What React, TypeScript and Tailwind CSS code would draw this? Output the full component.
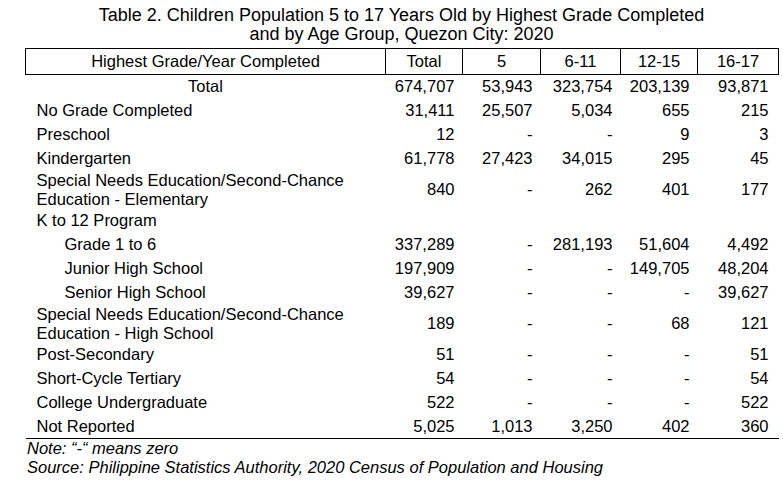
type Row = {
  label: string[];
  values: string[];
  indent?: boolean;
  center?: boolean;
  tall?: boolean;
};

const columns = ['Total', '5', '6-11', '12-15', '16-17'];
const colWidths = ['w-[77px]', 'w-[78px]', 'w-[80px]', 'w-[77px]', 'w-[81px]'];

const rows: Row[] = [
  { label: ['Total'], values: ['674,707', '53,943', '323,754', '203,139', '93,871'], center: true },
  { label: ['No Grade Completed'], values: ['31,411', '25,507', '5,034', '655', '215'] },
  { label: ['Preschool'], values: ['12', '-', '-', '9', '3'] },
  { label: ['Kindergarten'], values: ['61,778', '27,423', '34,015', '295', '45'] },
  {
    label: ['Special Needs Education/Second-Chance', 'Education - Elementary'],
    values: ['840', '-', '262', '401', '177'],
    tall: true,
  },
  { label: ['K to 12 Program'], values: ['', '', '', '', ''] },
  { label: ['Grade 1 to 6'], values: ['337,289', '-', '281,193', '51,604', '4,492'], indent: true },
  { label: ['Junior High School'], values: ['197,909', '-', '-', '149,705', '48,204'], indent: true },
  { label: ['Senior High School'], values: ['39,627', '-', '-', '-', '39,627'], indent: true },
  {
    label: ['Special Needs Education/Second-Chance', 'Education - High School'],
    values: ['189', '-', '-', '68', '121'],
    tall: true,
  },
  { label: ['Post-Secondary'], values: ['51', '-', '-', '-', '51'] },
  { label: ['Short-Cycle Tertiary'], values: ['54', '-', '-', '-', '54'] },
  { label: ['College Undergraduate'], values: ['522', '-', '-', '-', '522'] },
  { label: ['Not Reported'], values: ['5,025', '1,013', '3,250', '402', '360'] },
];

const App = () => {
  return (
    <div className="min-h-[488px] bg-white text-black font-['Liberation_Sans',Arial,sans-serif]">
      <div className="ml-[25px] w-[753px] pt-[6px]">
        <h1 className="text-center text-[18px] leading-[19px] font-normal mb-[4px]">
          Table 2. Children Population 5 to 17 Years Old by Highest Grade Completed
          <br />
          and by Age Group, Quezon City: 2020
        </h1>

        <table className="w-[753px] table-fixed border-collapse text-[16.5px] leading-[19px]">
          <colgroup>
            <col className="w-[360px]" />
            {colWidths.map((w, i) => (
              <col key={i} className={w} />
            ))}
          </colgroup>
          <thead>
            <tr>
              <th className="h-[26px] p-0 border border-black font-normal text-center">
                Highest Grade/Year Completed
              </th>
              {columns.map((c) => (
                <th key={c} className="h-[26px] p-0 border border-black font-normal text-center">
                  {c}
                </th>
              ))}
            </tr>
          </thead>
          <tbody className="border-b border-black">
            {rows.map((row, i) => (
              <tr key={i} className={row.tall ? 'h-[38px]' : 'h-[24px]'}>
                <td
                  className={`p-0 align-middle ${
                    row.center ? 'text-center' : row.indent ? 'pl-[39px]' : 'pl-[11px]'
                  }`}
                >
                  {row.label.map((l, j) => (
                    <div key={j}>{l}</div>
                  ))}
                </td>
                {row.values.map((v, j) => (
                  <td
                    key={j}
                    className={`p-0 align-middle text-right ${j === 4 ? 'pr-[10px]' : 'pr-[8px]'}`}
                  >
                    {v}
                  </td>
                ))}
              </tr>
            ))}
          </tbody>
        </table>

        <div className="pl-[2px] text-[16.5px] leading-[19px] italic">
          <p>Note: “-“ means zero</p>
          <p>Source: Philippine Statistics Authority, 2020 Census of Population and Housing</p>
        </div>
      </div>
    </div>
  );
};

export default App;
